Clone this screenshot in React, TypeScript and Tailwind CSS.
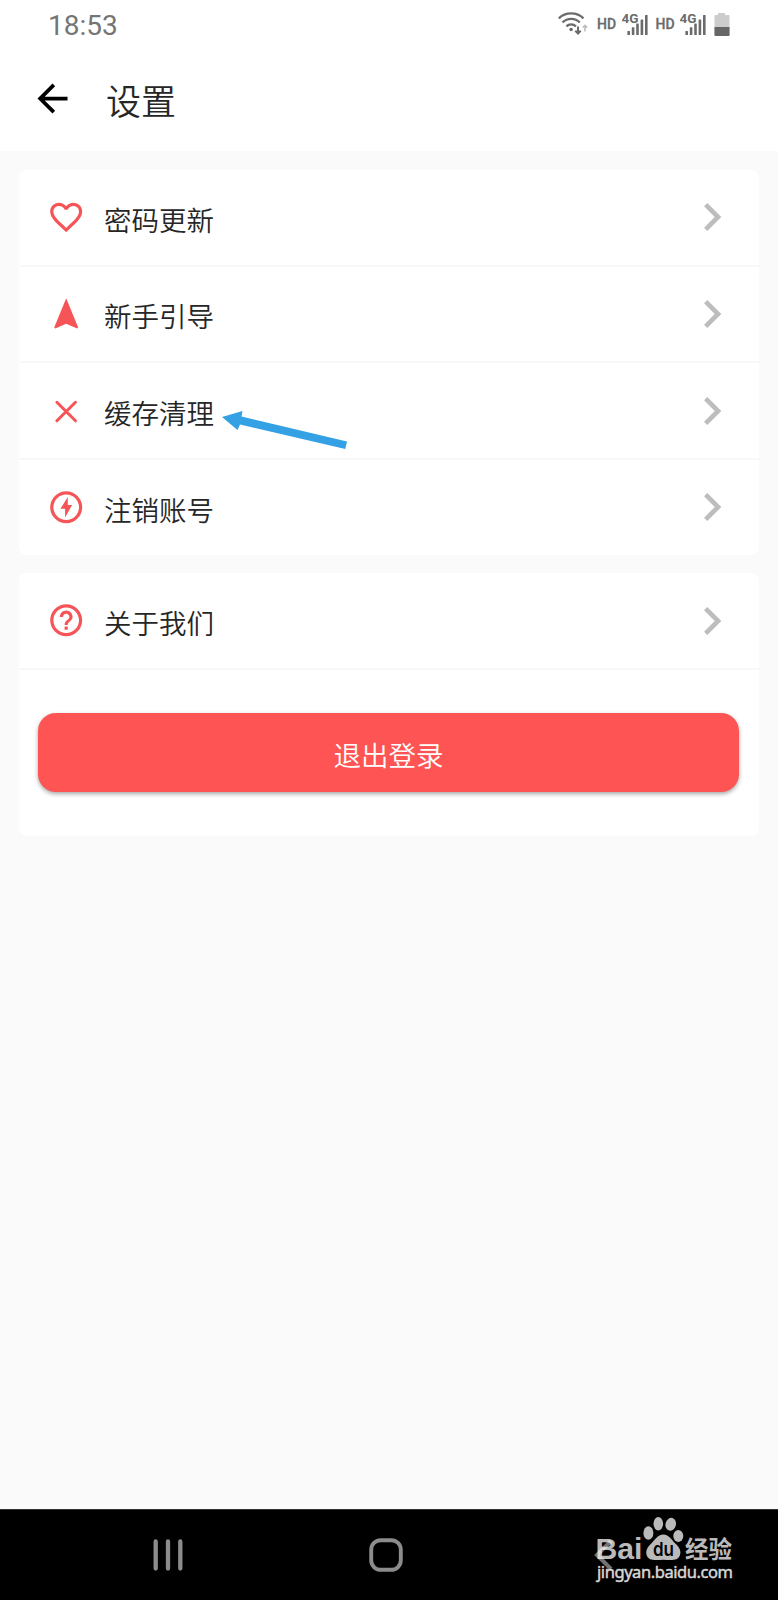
import type { ReactNode } from "react";

const cjk = "font-['Roboto','Noto_Sans_CJK_SC',sans-serif]";

const HeartIcon = () => (
	<path d="M16.5 3c-1.74 0-3.41.81-4.5 2.09C10.91 3.81 9.24 3 7.5 3 4.42 3 2 5.42 2 8.5c0 3.78 3.4 6.86 8.55 11.54L12 21.35l1.45-1.32C18.6 15.36 22 12.28 22 8.5 22 5.42 19.58 3 16.5 3zm-4.4 15.55l-.1.1-.1-.1C7.14 14.24 4 11.39 4 8.5 4 6.5 5.5 5 7.5 5c1.54 0 3.04.99 3.57 2.36h1.87C13.46 5.99 14.96 5 16.5 5c2 0 3.5 1.5 3.5 3.5 0 2.89-3.14 5.74-7.9 10.05z" />
);

const NavigationIcon = () => (
	<path d="M12 2L4.5 20.29l.71.71L12 18l6.79 3 .71-.71z" />
);

const CloseIcon = () => (
	<path d="M6.2 6.4l11.6 11.6M17.8 6.4L6.2 18" stroke="currentColor" strokeWidth="1.9" strokeLinecap="round" />
);

const FlashIcon = () => (
	<>
		<circle cx="12" cy="12" r="9" fill="none" stroke="currentColor" strokeWidth="2" />
		<path d="M13 5.700L8.400 13h2.900v5.400L15.700 10.600H13z" />
	</>
);

const HelpIcon = () => (
	<path d="M11 18h2v-2h-2v2zm1-16C6.48 2 2 6.48 2 12s4.48 10 10 10 10-4.48 10-10S17.52 2 12 2zm0 18c-4.41 0-8-3.59-8-8s3.59-8 8-8 8 3.59 8 8-3.59 8-8 8zm0-14c-2.21 0-4 1.79-4 4h2c0-1.1.9-2 2-2s2 .9 2 2c0 2-3 1.75-3 5h2c0-2.25 3-2.5 3-5 0-2.21-1.79-4-4-4z" />
);

interface RowProps {
	icon: ReactNode;
	label: string;
}

const Row = ({ icon, label }: RowProps) => (
	<div className="flex h-[94.7px] items-center pr-[19px] pl-[27.5px]">
		<svg viewBox="0 0 24 24" className="size-[38.4px] shrink-0 text-[#f65558]" fill="currentColor">
			{icon}
		</svg>
		<span className="ml-[19px] flex-1 pt-2 text-[27.5px] leading-none text-[#262626]">{label}</span>
		<svg viewBox="0 0 24 24" className="size-14 text-[#bdbdbd]" fill="currentColor">
			<path d="M10 6L8.59 7.41 13.17 12l-4.58 4.59L10 18l6-6z" />
		</svg>
	</div>
);

const Divider = () => <div className="h-0.5 bg-[#f8f8f8]" />;

const Signal = () => (
	<svg width="28" height="24" viewBox="0 0 28 24" fill="#6b6b6b">
		<text x="-0.5" y="10.5" fontSize="13.5" fontWeight="700" fontFamily="Roboto, sans-serif">4G</text>
		<rect x="5.4" y="19" width="2.6" height="4" rx="0.5" />
		<rect x="9.8" y="15.3" width="2.6" height="7.7" rx="0.5" />
		<rect x="14.2" y="11.5" width="2.6" height="11.5" rx="0.5" />
		<rect x="18.6" y="7.5" width="2.6" height="15.5" rx="0.5" />
		<rect x="23" y="3" width="2.6" height="20" rx="0.5" />
	</svg>
);

const StatusBar = () => (
	<div className="flex h-12 items-center justify-between px-12 font-normal">
		<span className="pt-[3px] text-[28px] leading-none text-[#757575]">18:53</span>
		<div className="flex items-center pb-px">
			<svg width="30" height="24" viewBox="0 0 30 24" fill="none" stroke="#6b6b6b" strokeWidth="2.3">
				<path d="M.8 6.3C7.5-.2 18.8-.2 25.5 6.3M4.5 10.5c5-4.8 12.4-4.8 17.3 0M8.4 14.3c2.7-2.5 6.8-2.5 9.6 0" />
				<circle cx="13.1" cy="17.5" r="1.8" fill="#6b6b6b" stroke="none" />
				<path d="M20 14.5v7M17.3 18.7l2.7 2.8 2.7-2.8" strokeWidth="2" />
				<path d="M27 19.5v-6M24.9 15.6l2.1-2.1 2.1 2.1" stroke="#bdbdbd" strokeWidth="1.6" />
			</svg>
			<span className="ml-[9.5px] w-[24.5px] text-[14px] leading-none font-medium text-[#6b6b6b] [-webkit-text-stroke:0.3px_#6b6b6b]">HD</span>
			<Signal />
			<span className="ml-[6px] w-[24.3px] text-[14px] leading-none font-medium text-[#6b6b6b] [-webkit-text-stroke:0.3px_#6b6b6b]">HD</span>
			<Signal />
			<svg width="16" height="24" viewBox="0 0 16 24" className="ml-[6.2px]">
				<path d="M4 1h7v2h3.5a1 1 0 0 1 1 1v19a1 1 0 0 1-1 1h-13a1 1 0 0 1-1-1V4a1 1 0 0 1 1-1H4z" fill="#cccccc" />
				<path d="M.5 15h15v8a1 1 0 0 1-1 1h-13a1 1 0 0 1-1-1z" fill="#666666" />
			</svg>
		</div>
	</div>
);

const Watermark = () => (
	<svg className="absolute top-[6px] left-[590px]" width="150" height="76" viewBox="0 0 150 76" fill="#bababa">
		<text x="5.5" y="43.2" fontSize="30" fontWeight="700" fontFamily="'Liberation Sans', sans-serif" textLength="47" lengthAdjust="spacingAndGlyphs">Bai</text>
		<ellipse cx="58.4" cy="17" rx="5" ry="6.8" />
		<ellipse cx="68.3" cy="7.8" rx="4.8" ry="6.8" />
		<ellipse cx="80.7" cy="8.3" rx="5.2" ry="6.5" transform="rotate(15 80.7 8.3)" />
		<ellipse cx="88.3" cy="20" rx="5" ry="6" />
		<path d="M73.3 18.5c6 0 8 5.5 12 9 4.5 4 6 8 4.5 12-2 5-7 5-16.500 4.200-9.500.8-14.500.8-16.500-4.200-1.500-4 0-8 4.500-12 4-3.500 6-9 12-9z" />
		<text x="63" y="39.5" fontSize="19" fontWeight="600" fontFamily="Inter, sans-serif" fill="#000" textLength="21" lengthAdjust="spacingAndGlyphs">du</text>
		<text x="95" y="41.5" fontSize="23.5" fontWeight="700" fontFamily="'Noto Sans CJK SC', sans-serif">经验</text>
		<text x="7" y="61.7" fontSize="16.5" fontWeight="400" fill="#d6d6d6" fontFamily="'Noto Sans', sans-serif" stroke="#d6d6d6" strokeWidth="0.5" textLength="136">jingyan.baidu.com</text>
	</svg>
);

const NavBar = () => (
	<div className="relative h-[91px] border-t border-[#333333] bg-black">
		<svg className="block" width="778" height="90" viewBox="0 0 778 90" fill="none" stroke="#8c8c8c">
			<path d="M155.7 31.500v27M168 31.500v27M180.300 31.500v27" strokeWidth="4.3" strokeLinecap="round" />
			<rect x="371.2" y="30.2" width="29.6" height="29.6" rx="9.5" strokeWidth="3.9" />
		</svg>
		<Watermark />
		<svg className="absolute top-[28px] left-[593px]" width="22" height="34" viewBox="0 0 22 34" fill="none" stroke="#ffffff" strokeOpacity="0.45">
			<path d="M18 3L4 17l14 14" strokeWidth="4" />
		</svg>
	</div>
);

const App = () => {
	return (
		<div className={`flex h-[1600px] w-[778px] flex-col overflow-hidden bg-[#fafafa] font-[350] ${cjk}`}>
			<header className="h-[151px] bg-white">
				<StatusBar />
				<div className="flex h-[101px] items-center pl-[29.5px]">
					<svg viewBox="0 0 24 24" className="size-[45px]" fill="#000">
						<path d="M20 11H7.830l5.590-5.590L12 4l-8 8 8 8 1.410-1.410L7.830 13H20v-2z" />
					</svg>
					<h1 className="ml-[31.5px] pt-[9px] text-[35px] leading-none text-[#262626]">设置</h1>
				</div>
			</header>
			<main className="flex flex-1 flex-col gap-[18.5px] px-[19px] pt-[19px]">
				<section className="rounded-lg bg-white">
					<Row icon={<HeartIcon />} label="密码更新" />
					<Divider />
					<Row icon={<NavigationIcon />} label="新手引导" />
					<Divider />
					<div className="relative">
						<Row icon={<CloseIcon />} label="缓存清理" />
						<svg className="absolute top-[47px] left-[202px]" width="128" height="44" viewBox="0 0 128 44" fill="#34a1e4">
							<path d="M1 7L21.500 1l-1 5.500L126 31.500l-1.700 7.500L19 14.500 16.500 20z" />
						</svg>
					</div>
					<Divider />
					<Row icon={<FlashIcon />} label="注销账号" />
				</section>
				<section className="h-[263px] rounded-lg bg-white">
					<Row icon={<HelpIcon />} label="关于我们" />
					<Divider />
					<button className="mx-[19px] mt-[43.5px] block h-[79px] w-[701px] rounded-[18px] bg-[#ff5454] pt-2 text-[27.5px] leading-none text-white shadow-[0_2px_4px_rgba(0,0,0,0.35)]">
						退出登录
					</button>
				</section>
			</main>
			<NavBar />
		</div>
	);
};

export default App;
